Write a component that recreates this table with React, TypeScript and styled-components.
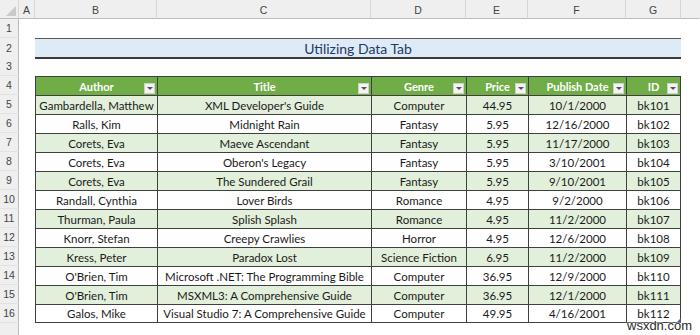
import React from "react";
import styled, { createGlobalStyle } from "styled-components";

const Global = createGlobalStyle`
  html, body { margin: 0; padding: 0; background: #ffffff; overflow: hidden; }
  body { font-family: Lato, "Liberation Sans", sans-serif; }
  * { box-sizing: border-box; }
`;

const COLS = "19px 16px 122px 214px 95px 62px 98px 55px 1fr";
const LINE = "#3f3f3f";

const Sheet = styled.div`
  position: relative;
  width: 700px;
  height: 335px;
  overflow: hidden;
  background: #ffffff;
`;

const Row = styled.div<{ $h?: number }>`
  display: grid;
  grid-template-columns: ${COLS};
  height: ${(p) => p.$h ?? 19}px;
`;

const ColHead = styled.div<{ $last?: boolean }>`
  background: #efefef;
  border-bottom: 1px solid #bcbcbc;
  border-right: 1px solid ${(p) => (p.$last ? "transparent" : "#d6d6d6")};
  color: #444;
  font-family: "Liberation Sans", Arial, sans-serif;
  font-size: 10.5px;
  display: flex;
  align-items: center;
  justify-content: center;
  padding-top: 1px;
`;

const Corner = styled.div`
  background: #efefef;
  border-bottom: 1px solid #bcbcbc;
  border-right: 1px solid #d6d6d6;
  display: flex;
  align-items: flex-end;
  justify-content: flex-end;
  padding: 0 2px 2px 0;
`;

const CornerTri = styled.div`
  width: 0;
  height: 0;
  border-left: 10px solid transparent;
  border-bottom: 10px solid #c9c9c9;
`;

const RowNum = styled.div`
  background: #efefef;
  border-right: 1px solid #bcbcbc;
  border-bottom: 1px solid #e2e2e2;
  color: #444;
  font-family: "Liberation Sans", Arial, sans-serif;
  font-size: 10.5px;
  display: flex;
  align-items: center;
  justify-content: center;
`;

const Blank = styled.div``;

const TitleBar = styled.div`
  grid-column: 3 / 9;
  background: #ddebf7;
  border-top: 1px solid #5a5a5a;
  border-bottom: 2px solid #3a3a3a;
  color: #1f3864;
  font-size: 14px;
  display: flex;
  align-items: center;
  justify-content: center;
  padding-top: 1px;
`;

const Cell = styled.div<{ $bg: string; $right?: boolean; $bottom?: boolean }>`
  background: ${(p) => p.$bg};
  border-left: 1px solid ${LINE};
  border-top: 1px solid ${LINE};
  border-right: ${(p) => (p.$right ? `1px solid ${LINE}` : "none")};
  border-bottom: ${(p) => (p.$bottom ? `1px solid ${LINE}` : "none")};
  color: #1a1a1a;
  font-size: 11.5px;
  display: flex;
  align-items: center;
  justify-content: center;
  white-space: nowrap;
  overflow: hidden;
`;

const HeadCell = styled(Cell)`
  position: relative;
  color: #ffffff;
  font-size: 11px;
  font-weight: 700;
`;

const FilterBtn = styled.span`
  position: absolute;
  right: 2px;
  top: 6px;
  width: 11px;
  height: 11px;
  background: #f3f3f3;
  border: 1px solid #d0d0d0;
  display: flex;
  align-items: center;
  justify-content: center;
`;

const Arrow = styled.span`
  width: 0;
  height: 0;
  border-left: 3px solid transparent;
  border-right: 3px solid transparent;
  border-top: 3px solid #555;
`;

const Watermark = styled.div`
  position: absolute;
  left: 627px;
  top: 319px;
  font-family: "Liberation Sans", Arial, sans-serif;
  font-size: 13px;
  line-height: 14px;
  color: #2a2a2a;
  text-shadow: 0 0 2px #fff, 0 0 2px #fff, 0 0 2px #fff;
`;

const Handle = styled.div`
  position: absolute;
  left: 677px;
  top: 318px;
  width: 0;
  height: 0;
  border-left: 4px solid transparent;
  border-bottom: 4px solid #3d5aa8;
`;

const headers = ["Author", "Title", "Genre", "Price", "Publish Date", "ID"];

const books: string[][] = [
  ["Gambardella, Matthew", "XML Developer's Guide", "Computer", "44.95", "10/1/2000", "bk101"],
  ["Ralls, Kim", "Midnight Rain", "Fantasy", "5.95", "12/16/2000", "bk102"],
  ["Corets, Eva", "Maeve Ascendant", "Fantasy", "5.95", "11/17/2000", "bk103"],
  ["Corets, Eva", "Oberon's Legacy", "Fantasy", "5.95", "3/10/2001", "bk104"],
  ["Corets, Eva", "The Sundered Grail", "Fantasy", "5.95", "9/10/2001", "bk105"],
  ["Randall, Cynthia", "Lover Birds", "Romance", "4.95", "9/2/2000", "bk106"],
  ["Thurman, Paula", "Splish Splash", "Romance", "4.95", "11/2/2000", "bk107"],
  ["Knorr, Stefan", "Creepy Crawlies", "Horror", "4.95", "12/6/2000", "bk108"],
  ["Kress, Peter", "Paradox Lost", "Science Fiction", "6.95", "11/2/2000", "bk109"],
  ["O'Brien, Tim", "Microsoft .NET: The Programming Bible", "Computer", "36.95", "12/9/2000", "bk110"],
  ["O'Brien, Tim", "MSXML3: A Comprehensive Guide", "Computer", "36.95", "12/1/2000", "bk111"],
  ["Galos, Mike", "Visual Studio 7: A Comprehensive Guide", "Computer", "49.95", "4/16/2001", "bk112"],
];

const letters = ["A", "B", "C", "D", "E", "F", "G", ""];

export default function App() {
  return (
    <Sheet>
      <Global />
      <Row $h={19}>
        <Corner>
          <CornerTri />
        </Corner>
        {letters.map((l, i) => (
          <ColHead key={i} $last={i === letters.length - 1}>
            {l}
          </ColHead>
        ))}
      </Row>
      <Row>
        <RowNum>1</RowNum>
      </Row>
      <Row>
        <RowNum>2</RowNum>
        <Blank />
        <TitleBar>Utilizing Data Tab</TitleBar>
      </Row>
      <Row>
        <RowNum>3</RowNum>
      </Row>
      <Row>
        <RowNum>4</RowNum>
        <Blank />
        {headers.map((h, i) => (
          <HeadCell key={h} $bg="#70ad47" $right={i === headers.length - 1}>
            {h}
            <FilterBtn>
              <Arrow />
            </FilterBtn>
          </HeadCell>
        ))}
      </Row>
      {books.map((b, r) => (
        <Row key={r}>
          <RowNum>{r + 5}</RowNum>
          <Blank />
          {b.map((v, i) => (
            <Cell
              key={i}
              $bg={r % 2 === 0 ? "#e2efda" : "#ffffff"}
              $right={i === b.length - 1}
              $bottom={r === books.length - 1}
            >
              {v}
            </Cell>
          ))}
        </Row>
      ))}
      <Row>
        <RowNum />
      </Row>
      <Handle />
      <Watermark>wsxdn.com</Watermark>
    </Sheet>
  );
}
